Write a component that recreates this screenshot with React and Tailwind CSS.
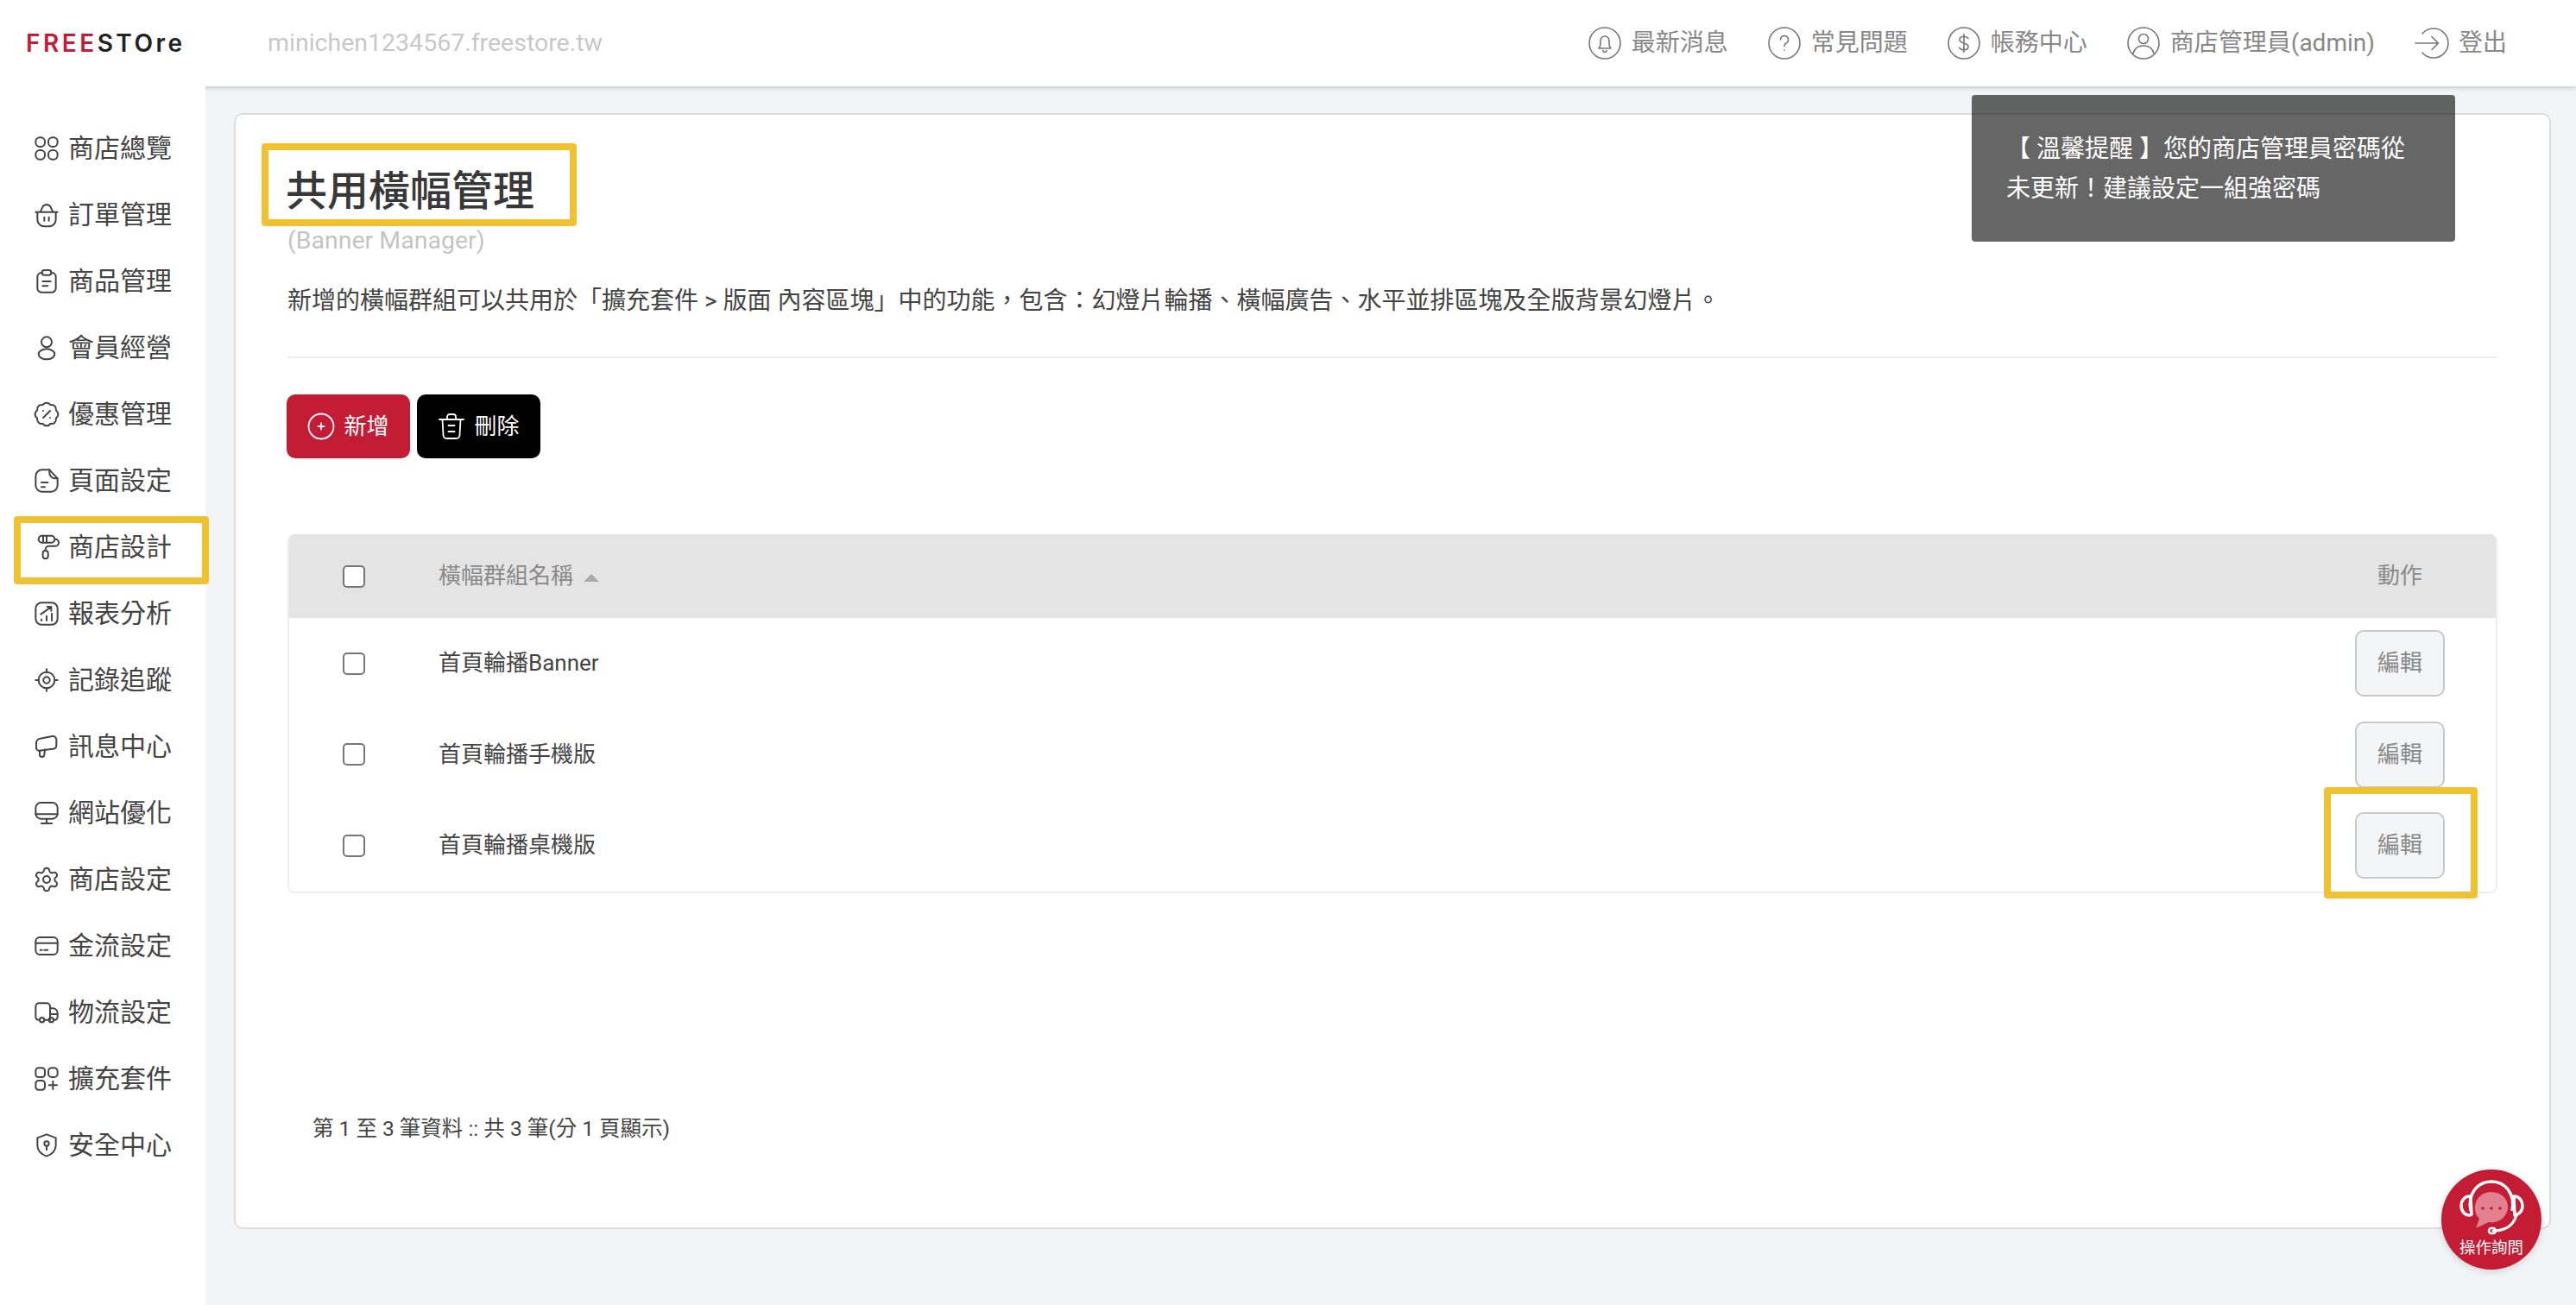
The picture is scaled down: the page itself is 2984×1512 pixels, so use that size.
import React from 'react';
import { BadgePercent, Settings } from 'lucide-react';

const font = "font-['Roboto','Noto_Sans_CJK_TC',sans-serif]";

// --- sidebar icons, drawn on a 24 grid ---
const Svg = ({ children, className = 'w-8 h-8' }) => (
  <svg viewBox="0 0 24 24" fill="none" stroke="currentColor" strokeWidth="1.5" strokeLinecap="round" strokeLinejoin="round" className={className}>
    {children}
  </svg>
);

const icons = {
  overview: (
    <Svg>
      <rect x="2.5" y="2.5" width="8" height="8" rx="3.5" />
      <rect x="13.5" y="2.5" width="8" height="8" rx="3.5" />
      <rect x="2.5" y="13.5" width="8" height="8" rx="3.5" />
      <rect x="13.5" y="13.5" width="8" height="8" rx="3.5" />
    </Svg>
  ),
  basket: (
    <Svg>
      <path d="M2.5 9.5h19M6.5 9.5 9 4.2Q12 2 15 4.2l2.5 5.3" />
      <path d="M4 9.5V16a6 6 0 0 0 6 6h4a6 6 0 0 0 6-6V9.5" />
      <path d="M10 14v3M14 14v3" />
    </Svg>
  ),
  clipboard: (
    <Svg>
      <path d="M8 4.5H7.5a3.5 3.5 0 0 0-3.5 3.5v10a3.5 3.5 0 0 0 3.5 3.5h9a3.5 3.5 0 0 0 3.5-3.5V8a3.5 3.5 0 0 0-3.5-3.5H16" />
      <rect x="8" y="2.2" width="8" height="4.3" rx="2" />
      <path d="M8.5 12h7M8.5 16h4.5" />
    </Svg>
  ),
  user: (
    <Svg>
      <circle cx="12" cy="7" r="4.5" />
      <ellipse cx="12" cy="17.5" rx="7" ry="4.5" />
    </Svg>
  ),
  note: (
    <Svg>
      <path d="M8 2.5h6.5l7 7.5v6a5.5 5.5 0 0 1-5.5 5.5H8A5.5 5.5 0 0 1 2.5 16V8A5.5 5.5 0 0 1 8 2.5z" />
      <path d="M14.5 2.5V5a5 5 0 0 0 5 5h2" />
      <path d="M7.5 13.5H13M7.5 17.5h3" />
    </Svg>
  ),
  roller: (
    <Svg>
      <rect x="5" y="2" width="14" height="6" rx="3" />
      <path d="M9 2v6M12 2v6" />
      <path d="M19 5h.5a2.5 2.5 0 0 1 0 6H14a3 3 0 0 0-3 3v1" />
      <rect x="8.7" y="15" width="4.6" height="7" rx="2.3" />
    </Svg>
  ),
  chart: (
    <Svg>
      <rect x="2.5" y="2.5" width="19" height="19" rx="5" />
      <path d="M7.5 18v-1M12 18v-4M16.5 18v-6M7 12.5l8.5-6M12.5 6H16v3.5" />
    </Svg>
  ),
  target: (
    <Svg>
      <circle cx="12" cy="12" r="7" />
      <circle cx="12" cy="12" r="2.8" />
      <path d="M12 2.5V5M12 19v2.5M2.5 12H5M19 12h2.5" />
    </Svg>
  ),
  megaphone: (
    <Svg>
      <path d="M6 15.5H5a2.5 2.5 0 0 1-2-3V9a4 4 0 0 1 3.5-4L17 3a3 3 0 0 1 3.5 3v5a3 3 0 0 1-3.5 3z" />
      <path d="M6 15.5V19a2 2 0 0 0 4 0l.5-4.5" />
    </Svg>
  ),
  monitor: (
    <Svg>
      <rect x="2.5" y="3" width="19" height="14" rx="4.5" />
      <path d="M2.5 13h19M12 17v4M7.5 21h9" />
    </Svg>
  ),
  card: (
    <Svg>
      <rect x="2.5" y="4.5" width="19" height="15" rx="3.5" />
      <path d="M2.5 9.5h19M6.5 15.5H8M10 15.5h3" />
    </Svg>
  ),
  truck: (
    <Svg>
      <path d="M6 18.5H5A2.5 2.5 0 0 1 2.5 16V7a3 3 0 0 1 3-3H12a3 3 0 0 1 3 3v11.5h-5" />
      <path d="M15 8.5h2.5a4 4 0 0 1 4 4V16a2.5 2.5 0 0 1-2.5 2.5h-1M15 13.5h6.5" />
      <circle cx="8" cy="18.5" r="2" />
      <circle cx="16" cy="18.5" r="2" />
    </Svg>
  ),
  addon: (
    <Svg>
      <rect x="2.5" y="2.5" width="8" height="8" rx="2.5" />
      <rect x="13.5" y="2.5" width="8" height="8" rx="3" />
      <rect x="2.5" y="13.5" width="8" height="8" rx="2.5" />
      <path d="M17.5 14v7M14 17.5h7" />
    </Svg>
  ),
  shield: (
    <Svg>
      <path d="M12 2.5l8 3V12c0 5-4 8-8 9.5-4-1.5-8-4.5-8-9.5V5.5z" />
      <circle cx="12" cy="10.5" r="2" />
      <path d="M12 12.5V16" />
    </Svg>
  ),
  discount: <BadgePercent className="w-8 h-8" strokeWidth={1.5} />,
  gear: <Settings className="w-8 h-8" strokeWidth={1.5} />,
};

const navItems = [
  ['商店總覽', 'overview'],
  ['訂單管理', 'basket'],
  ['商品管理', 'clipboard'],
  ['會員經營', 'user'],
  ['優惠管理', 'discount'],
  ['頁面設定', 'note'],
  ['商店設計', 'roller', true],
  ['報表分析', 'chart'],
  ['記錄追蹤', 'target'],
  ['訊息中心', 'megaphone'],
  ['網站優化', 'monitor'],
  ['商店設定', 'gear'],
  ['金流設定', 'card'],
  ['物流設定', 'truck'],
  ['擴充套件', 'addon'],
  ['安全中心', 'shield'],
];

// --- header icons: thin outlined circles ---
const RoundIcon = ({ children }) => (
  <svg viewBox="0 0 38 38" fill="none" stroke="#777" strokeWidth="1.6" strokeLinecap="round" strokeLinejoin="round" className="w-[38px] h-[38px] shrink-0">
    <circle cx="19" cy="19" r="18" />
    {children}
  </svg>
);

const topLinks = [
  ['最新消息', <RoundIcon key="b"><path d="M12 25h14c-1.5-1.5-2-3-2-5.5V16a5 5 0 0 0-10 0v3.5c0 2.5-.5 4-2 5.5zM17 27.5a2 2 0 0 0 4 0" /></RoundIcon>],
  ['常見問題', <RoundIcon key="q"><path d="M14.5 15a4.5 4.5 0 1 1 6.5 4c-1.5 1-2 1.8-2 3.5" /><path d="M19 27v.2" /></RoundIcon>],
  ['帳務中心', <RoundIcon key="d"><path d="M24 13.5c-1-1.5-3-2.3-5-2.3-3 0-5 1.6-5 3.8 0 5 10 3 10 8 0 2.2-2 3.8-5 3.8-2.2 0-4.2-.9-5.2-2.5M19 8.5v21" /></RoundIcon>],
  ['商店管理員(admin)', <RoundIcon key="u"><circle cx="19" cy="14" r="5.5" /><path d="M7 31c1.5-6 6-9 12-9s10.5 3 12 9" /></RoundIcon>],
];

const rows = ['首頁輪播Banner', '首頁輪播手機版', '首頁輪播桌機版'];

const Check = () => <span className="block w-[26px] h-[26px] ml-[62px] bg-white border-2 border-[#767676] rounded-[5px]" />;

const Highlight = ({ className }) => (
  <div className={`absolute border-[8px] border-[#f0c232] rounded-[4px] pointer-events-none ${className}`} />
);

export default function App() {
  return (
    <div className={`${font} relative w-[2984px] h-[1512px] overflow-hidden bg-[#f3f4f6] text-[#333]`}>
      {/* HEADER */}
      <header className="relative z-10 h-[100px] bg-white shadow-[0_2px_5px_rgba(0,0,0,0.18)] flex items-center pl-[30px] pr-[80px]">
        <div className="w-[280px] font-['Inter',sans-serif] text-[28px] leading-none font-semibold tracking-[3.5px]">
          <span className="text-[#c41c34]">FREE</span><span className="text-[#222]">STOre</span>
        </div>
        <div className="text-[28.5px] text-[#c8c8c8]">minichen1234567.freestore.tw</div>
        <nav className="ml-auto flex items-center gap-[46px] text-[28px] text-[#888]">
          {topLinks.map(([label, icon]) => (
            <div key={label} className="flex items-center gap-[12px]">
              {icon}
              <span>{label}</span>
            </div>
          ))}
          <div className="flex items-center gap-[11px]">
            <svg viewBox="0 0 40 38" fill="none" stroke="#777" strokeWidth="1.6" strokeLinecap="round" strokeLinejoin="round" className="w-[40px] h-[38px] shrink-0">
              <path d="M9 8a17 17 0 1 1 0 22" />
              <path d="M1 19h26M20 11.5l7.5 7.5-7.5 7.5" />
            </svg>
            <span>登出</span>
          </div>
        </nav>
      </header>

      <div className="flex h-[1412px]">
        {/* SIDEBAR */}
        <aside className="relative z-10 w-[238px] shrink-0 bg-white pt-[33px] flex flex-col">
          {navItems.map(([label, icon, active]) => (
            <div key={label} className="relative h-[77px] shrink-0 flex items-center gap-[9px] pl-[38px] text-[30px] text-[#444]">
              {icons[icon]}
              <span className="whitespace-nowrap">{label}</span>
              {active && <Highlight className="left-[16px] -right-[4px] top-[3px] bottom-[-5px]" />}
            </div>
          ))}
        </aside>

        {/* MAIN CARD */}
        <main className="flex-1 pl-[33px] pr-[29px] pt-[31px]">
          <div className="relative h-[1293px] bg-white border-2 border-[#dcdddf] rounded-[10px] pl-[60px] pr-[60px] pt-[59px]">
            <div className="relative w-fit -ml-[2px]">
              <h1 className="text-[48px] leading-[60px] font-medium text-[#383838]">共用橫幅管理</h1>
              <Highlight className="-left-[28px] -right-[49px] -top-[26px] -bottom-[10px]" />
            </div>
            <p className="mt-[12px] text-[28.5px] leading-[30px] text-[#c4c4c4]">(Banner Manager)</p>
            <p className="mt-[35px] text-[28px] leading-[40px] text-[#444]">
              新增的橫幅群組可以共用於「擴充套件 &gt; 版面 內容區塊」中的功能，包含：幻燈片輪播、橫幅廣告、水平並排區塊及全版背景幻燈片。
            </p>
            <div className="mt-[44px] h-[2px] bg-[#eeeeee]" />

            <div className="mt-[42px] -ml-[1px] flex gap-[8px]">
              <button className="w-[143px] h-[74px] rounded-[10px] bg-[#c41c34] text-white text-[26px] flex items-center justify-center gap-[10px]">
                <svg viewBox="0 0 32 32" fill="none" stroke="currentColor" strokeWidth="1.8" strokeLinecap="round" className="w-8 h-8">
                  <circle cx="16" cy="16" r="14.5" />
                  <path d="M12.5 16h7M16 12.5v7" />
                </svg>
                新增
              </button>
              <button className="w-[143px] h-[74px] rounded-[10px] bg-black text-white text-[26px] flex items-center justify-center gap-[10px]">
                <svg viewBox="0 0 32 32" fill="none" stroke="currentColor" strokeWidth="1.8" strokeLinecap="round" strokeLinejoin="round" className="w-8 h-8">
                  <path d="M2 8h28M11 7.5V5a3 3 0 0 1 3-3h4a3 3 0 0 1 3 3v2.5" />
                  <path d="M5.5 8l1 18a4 4 0 0 0 4 4h11a4 4 0 0 0 4-4l1-18" />
                  <path d="M12.5 15h7M12.5 22h7" />
                </svg>
                刪除
              </button>
            </div>

            {/* TABLE */}
            <div className="mt-[88px] rounded-[8px] border-2 border-[#eeeeee] border-t-0 overflow-hidden text-[26px]">
              <div className="grid grid-cols-[173px_1fr_222px] items-center h-[97px] bg-[#e4e4e4] text-[#8a8a8a]">
                <Check />
                <div className="flex items-center gap-[12px]">
                  <span>橫幅群組名稱</span>
                  <span className="w-0 h-0 border-x-[9px] border-x-transparent border-b-[9px] border-b-[#aaaaaa] mt-[4px]" />
                </div>
                <div className="text-center">動作</div>
              </div>
              {rows.map(name => (
                <div key={name} className="grid grid-cols-[173px_1fr_222px] items-center h-[105.5px] text-[#444]">
                  <Check />
                  <div>{name}</div>
                  <div className="flex justify-center">
                    <button className="w-[104px] h-[77px] rounded-[10px] border-2 border-[#c8c8c8] bg-[#f4f5f6] text-[#888]">編輯</button>
                  </div>
                </div>
              ))}
            </div>

            <p className="mt-[258px] ml-[29px] text-[24.5px] leading-[30px] text-[#444]">第 1 至 3 筆資料 :: 共 3 筆(分 1 頁顯示)</p>
            <Highlight className="left-[2419px] top-[779px] w-[178px] h-[129px]" />
          </div>
        </main>
      </div>

      {/* TOOLTIP */}
      <div className="absolute z-20 left-[2284px] top-[110px] w-[560px] h-[170px] rounded-[4px] bg-black/60 text-white text-[28px] leading-[46px] px-[40px] pt-[40px]">
        <p className="whitespace-nowrap">【 溫馨提醒 】您的商店管理員密碼從</p>
        <p>未更新！建議設定一組強密碼</p>
      </div>

      {/* HELP BUTTON */}
      <div className="absolute z-20 left-[2828px] top-[1355px] w-[116px] h-[116px] rounded-full bg-[#c41c34] shadow-[0_2px_8px_rgba(0,0,0,0.15)] flex flex-col items-center">
        <svg viewBox="0 0 116 76" fill="none" className="w-[116px] h-[76px] shrink-0">
          <path d="M58 26c-11 0-19 8-19 18 0 6 2 10 5 13l-4 11 15-7c1 0 2 .3 3 .3 11 0 19-8 19-18s-8-17-19-17z" fill="#e2808f" />
          <circle cx="48" cy="45" r="1.8" fill="#c41c34" />
          <circle cx="58" cy="45" r="1.8" fill="#c41c34" />
          <circle cx="68" cy="45" r="1.8" fill="#c41c34" />
          <path d="M34 48c-4-20 8-34 24-34s28 14 24 34" stroke="#fff" strokeWidth="3.5" />
          <path d="M33 31c-7 0-10 6-10 11s3 11 10 11l2-1-1-20z" stroke="#fff" strokeWidth="3.5" strokeLinejoin="round" />
          <path d="M84 31c7 0 10 6 10 11 0 4-2 8-6 10l-3 1z" stroke="#fff" strokeWidth="3.5" strokeLinejoin="round" />
          <path d="M87 53c-3 10-11 17-24 18h-3" stroke="#fff" strokeWidth="3" strokeLinecap="round" />
          <rect x="55" y="68" width="8" height="6" rx="3" stroke="#fff" strokeWidth="2.5" />
        </svg>
        <span className="text-[18.5px] leading-[22px] text-white whitespace-nowrap mt-[4px]">操作詢問</span>
      </div>
    </div>
  );
}
